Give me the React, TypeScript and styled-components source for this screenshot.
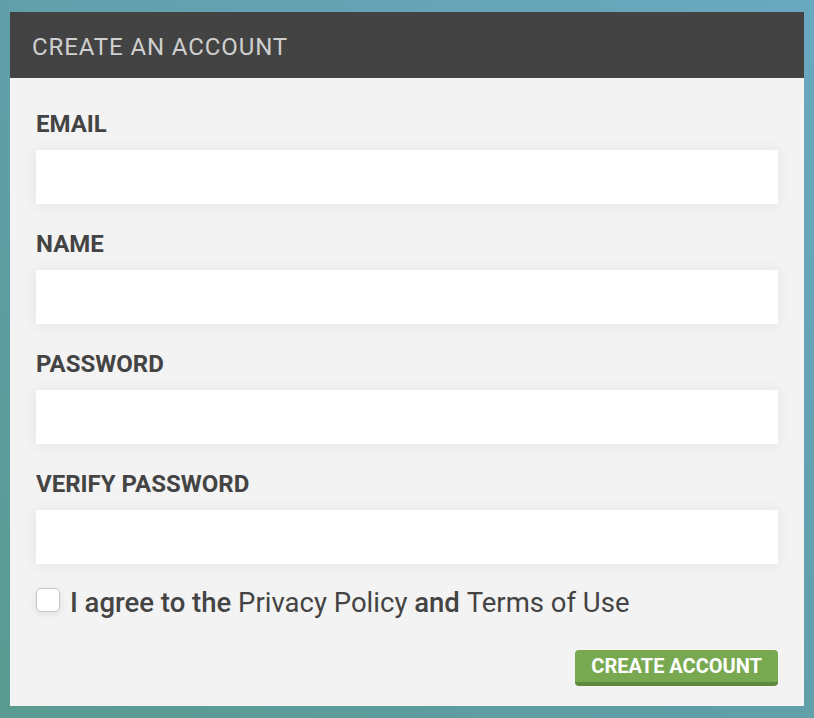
import React from 'react';
import styled, { createGlobalStyle } from 'styled-components';

const GlobalStyle = createGlobalStyle`
    html, body {
        margin: 0;
        padding: 0;
    }
    body {
        min-height: 718px;
        background: linear-gradient(to bottom left, #6aa8c0 0%, #619fab 50%, #5a9a90 100%);
        font-family: Roboto, "Open Sans", sans-serif;
    }
`;

const fields = ['Email', 'Name', 'Password', 'Verify Password'];

function App() {
    return (
        <>
            <GlobalStyle />
            <Page>
                <Panel>
                    <Header>Create an Account</Header>
                    <Body>
                        {fields.map((field) => (
                            <Field key={field}>
                                <Label>{field}</Label>
                                <Input type={field.includes('Password') ? 'password' : 'text'} />
                            </Field>
                        ))}
                        <Agree>
                            <Checkbox type="checkbox" />
                            <AgreeText>
                                I agree to the <Link>Privacy Policy</Link> and <Link>Terms of Use</Link>
                            </AgreeText>
                        </Agree>
                        <Actions>
                            <Button>Create Account</Button>
                        </Actions>
                    </Body>
                </Panel>
            </Page>
        </>
    );
}

const Page = styled.div`
    padding: 12px 10px;
`;

const Panel = styled.div`
    background-color: #f3f3f3;
    display: flex;
    flex-direction: column;
`;

const Header = styled.div`
    background-color: #434343;
    color: #cfcfcf;
    height: 66px;
    box-sizing: border-box;
    display: flex;
    align-items: center;
    padding: 4px 22px 0;
    font-size: 24px;
    letter-spacing: 0.9px;
    text-transform: uppercase;
`;

const Body = styled.div`
    padding: 32px 26px 20px;
    display: flex;
    flex-direction: column;
`;

const Field = styled.div`
    display: flex;
    flex-direction: column;
    margin-bottom: 26px;

    &:nth-last-child(3) {
        margin-bottom: 24px;
    }
`;

const Label = styled.label`
    font-size: 24px;
    line-height: 28px;
    font-weight: 700;
    color: #444;
    text-transform: uppercase;
    margin-bottom: 12px;
`;

const Input = styled.input`
    height: 54px;
    box-sizing: border-box;
    border: none;
    outline: none;
    background: #fff;
    box-shadow: 0 0 14px rgba(0, 0, 0, 0.07);
    padding: 0 14px;
    font-size: 20px;
    font-family: inherit;
`;

const Agree = styled.label`
    display: flex;
    align-items: center;
    gap: 10px;
    height: 24px;
`;

const Checkbox = styled.input`
    appearance: none;
    margin: 0;
    width: 24px;
    height: 24px;
    border: 1px solid #c4c4c4;
    border-radius: 5px;
    background: #fff;
    box-shadow: 0 2px 8px rgba(0, 0, 0, 0.08);
`;

const AgreeText = styled.span`
    font-size: 27.5px;
    font-weight: 500;
    color: #444;
    white-space: nowrap;
    position: relative;
    top: 2px;
`;

const Link = styled.span`
    font-weight: 400;
`;

const Actions = styled.div`
    display: flex;
    justify-content: flex-end;
    margin-top: 38px;
`;

const Button = styled.button`
    height: 36px;
    box-sizing: border-box;
    padding: 0 16px 1px;
    background-color: #78a951;
    border: none;
    border-bottom: 4px solid #5e8a40;
    border-radius: 4px;
    color: #fff;
    font-family: inherit;
    font-size: 20px;
    font-weight: 700;
    text-transform: uppercase;
    cursor: pointer;
`;

export default App;
